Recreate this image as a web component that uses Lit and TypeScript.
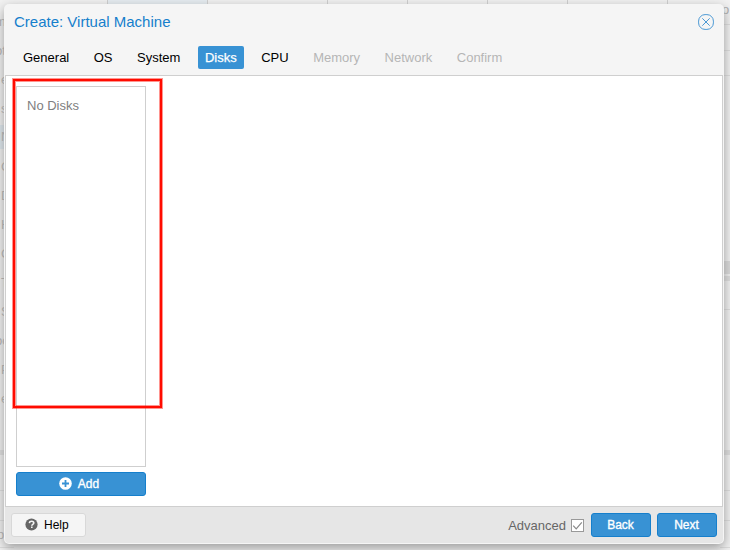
import { LitElement, html, css, svg } from "lit";
import { customElement, state } from "lit/decorators.js";
import { classMap } from "lit/directives/class-map.js";

const font = css`"Liberation Sans", Arial, Helvetica, sans-serif`;

@customElement("page-backdrop")
class PageBackdrop extends LitElement {
  static styles = css`
    :host { display: flex; justify-content: space-between; width: 100%; height: 100%; background: #f2f2f2; font: 13px ${font}; color: #aaa; overflow: hidden; }
    .tree { width: 14px; padding-top: 7px; }
    .row { height: 29px; line-height: 29px; white-space: nowrap; box-sizing: border-box; text-indent: 1px; }
    .row.word { text-indent: -5px; }
    .row.selected { background: #dbe6ee; height: 24px; line-height: 24px; margin: 2px 0 3px; }
    .gap { height: 37px; }
    .band { height: 5px; background: #dcdcdc; }
    .cell { box-sizing: border-box; border-bottom: 1px solid #dcdcdc; line-height: 28px; text-indent: -3px; white-space: nowrap; }
    .c36 { height: 36px; }
    .c30 { height: 30px; }
    .c27 { height: 27px; }
    .top { flex: 1; height: 4px; display: flex; padding-left: 93px; }
    .top i { flex: none; width: 80px; box-sizing: border-box; border-left: 1px solid #cecece; }
    .top .sorted { width: 100px; background: #e6edf2; }
    .top .wide { width: 120px; }
    .top .last { width: 100px; }
    .top .tail { width: 40px; }
    .side { width: 10px; }
    .side div { box-sizing: border-box; border-bottom: 1px solid #dcdcdc; line-height: 20px; text-indent: 2px; }
    .h25 { height: 25px; }
    .h26 { height: 26px; }
    .side .h185 { height: 185px; border: 0; }
    .side .bar { height: 13px; background: #d8d8d8; border: 0; }
    .side .bar2 { height: 5px; margin-top: 2px; background: #dcdcdc; border: 0; }
    .h29 { height: 29px; }
    .side .h140 { height: 140px; border: 0; }
    .side .bar3 { height: 5px; background: #dcdcdc; border: 0; }
  `;
  render() {
    const rows = ["m", "ot", "e", "s", "N", "C", "D", "H", "C", "T", "S", "oc", "P", "e"];
    const columns = ["sorted", "wide", "", "", "", "last", "tail"];
    return html`
      <div class="tree">
        ${rows.map((r, i) => html`<div class=${classMap({ row: true, selected: i === 4, word: r === "m" || r.length > 1 })}>${r}</div>`)}
        <div class="gap"></div>
        <div class="band"></div>
        <div class="cell c36"></div><div class="cell c30"></div><div class="cell c27">p.</div>
      </div>
      <div class="top">${columns.map((c) => html`<i class=${c}></i>`)}</div>
      <div class="side">
        <div class="h25">o</div><div class="h26"></div><div class="h25"></div><div class="h185"></div>
        <div class="bar"></div><div class="bar2"></div><div class="h29"></div><div class="h140"></div>
        <div class="bar3"></div><div class="c36"></div><div class="c30"></div><div class="c27"></div>
      </div>`;
  }
}

@customElement("action-button")
class ActionButton extends LitElement {
  static styles = css`
    :host { display: block; }
    button { box-sizing: border-box; width: 100%; height: 24px; border: 1px solid #157fcc; border-radius: 3px; background: #3892d4; color: #fff; font: 12px/20px ${font}; -webkit-text-stroke: 0.35px #fff; padding: 0 1px 1px 0; display: flex; align-items: center; justify-content: center; }
  `;
  render() {
    return html`<button><slot></slot></button>`;
  }
}

const plusIcon = svg`<circle cx="6.5" cy="6.5" r="6.3" fill="#fff"/><path d="M6.5 3v7M3 6.5h7" stroke="#3892d4" stroke-width="1.8"/>`;
const helpIcon = svg`<circle cx="6.5" cy="6.5" r="6.1" fill="#666"/><path d="M4.3 5.1C4.5 3.8 5.4 3.3 6.6 3.3c1.4 0 2.2.7 2.2 1.7 0 1.4-2 1.3-2 2.7" fill="none" stroke="#f5f5f5" stroke-width="1.6"/><path d="M6 8.5h1.6v1.6H6z" fill="#f5f5f5"/>`;

@customElement("app-root")
class AppRoot extends LitElement {
  @state() current = "Disks";

  static styles = css`
    :host { display: block; position: relative; width: 730px; height: 550px; overflow: hidden; font-family: ${font}; }
    .window { position: absolute; left: 4px; top: 4px; width: 720px; height: 540px; box-sizing: border-box; padding: 0 1px 1px; border-radius: 5px; background: #f5f5f5; box-shadow: 0 4px 12px #999; display: flex; flex-direction: column; }
    header { height: 35px; display: flex; justify-content: space-between; padding: 0 9px; color: #157fcc; font-size: 15px; line-height: 36px; }
    .close { width: 16px; height: 16px; margin-top: 10px; }
    nav { height: 36px; display: flex; align-items: flex-start; padding: 7px 0 0 11px; box-sizing: border-box; gap: 10.5px; font-size: 13px; }
    .tab { padding: 0 7px; height: 23px; line-height: 23px; color: #000; border-radius: 2px; }
    .tab.active { background: #3892d4; color: #fff; -webkit-text-stroke: 0.25px #fff; }
    .tab.disabled { color: #b5b5b5; }
    main { height: 432px; box-sizing: border-box; border: 1px solid #cfcfcf; background: #fff; padding: 10px; display: flex; flex-direction: column; gap: 5px; position: relative; }
    .list { width: 130px; height: 381px; box-sizing: border-box; border: 1px solid #cfcfcf; padding: 11px 10px; font-size: 13px; line-height: 16px; color: #808080; }
    .add { width: 130px; }
    .mark { position: absolute; left: 7px; top: 3px; width: 149px; height: 329px; box-sizing: border-box; border: 2px solid #ff0b00; box-shadow: 0 0 0 1px #ff0b0070, inset 0 0 0 1px #ff0b0070; }
    footer { flex: 1; background: #e6e6e6; display: flex; align-items: center; padding: 0 6px; border-radius: 0 0 4px 4px; }
    .help { box-sizing: border-box; width: 75px; height: 24px; border: 1px solid #d8d8d8; border-radius: 3px; background: #f5f5f5; font: 12px ${font}; padding: 0 0 1px 13px; display: flex; align-items: center; gap: 6px; color: #000; }
    .spacer { flex: 1; }
    .advanced { display: flex; align-items: center; gap: 5px; font-size: 13px; color: #666; margin-right: 7px; }
    .nav-button { width: 60px; }
    .nav-button + .nav-button { margin-left: 6px; }
    svg { display: block; flex: none; }
    .plus { margin-right: 6px; }
    .add-label { margin-right: 3px; }
  `;

  render() {
    const tabs = ["General", "OS", "System", "Disks", "CPU", "Memory", "Network", "Confirm"];
    return html`
      <page-backdrop></page-backdrop>
      <section class="window">
        <header>
          <span>Create: Virtual Machine</span>
          <svg class="close" viewBox="0 0 16 16" fill="none" stroke="#4a98d4"><rect x=".6" y=".6" width="14.8" height="14.8" rx="6.5"/><path d="M4.3 4.3l7.4 7.4M11.7 4.3l-7.4 7.4"/></svg>
        </header>
        <nav>
          ${tabs.map((t, i) => html`<span class=${classMap({ tab: true, active: t === this.current, disabled: i > 4 })}>${t}</span>`)}
        </nav>
        <main>
          <div class="list">No Disks</div>
          <action-button class="add"><svg class="plus" width="13" height="13">${plusIcon}</svg><span class="add-label">Add</span></action-button>
          <div class="mark"></div>
        </main>
        <footer>
          <button class="help"><svg width="13" height="13">${helpIcon}</svg>Help</button>
          <span class="spacer"></span>
          <label class="advanced">Advanced
            <svg width="13" height="13"><rect x=".5" y=".5" width="12" height="12" fill="#fff" stroke="#999"/><path d="M2.2 6.6l3 3.2 5.6-6.4" fill="none" stroke="#888" stroke-width="1.2"/></svg>
          </label>
          <action-button class="nav-button">Back</action-button>
          <action-button class="nav-button">Next</action-button>
        </footer>
      </section>`;
  }
}
